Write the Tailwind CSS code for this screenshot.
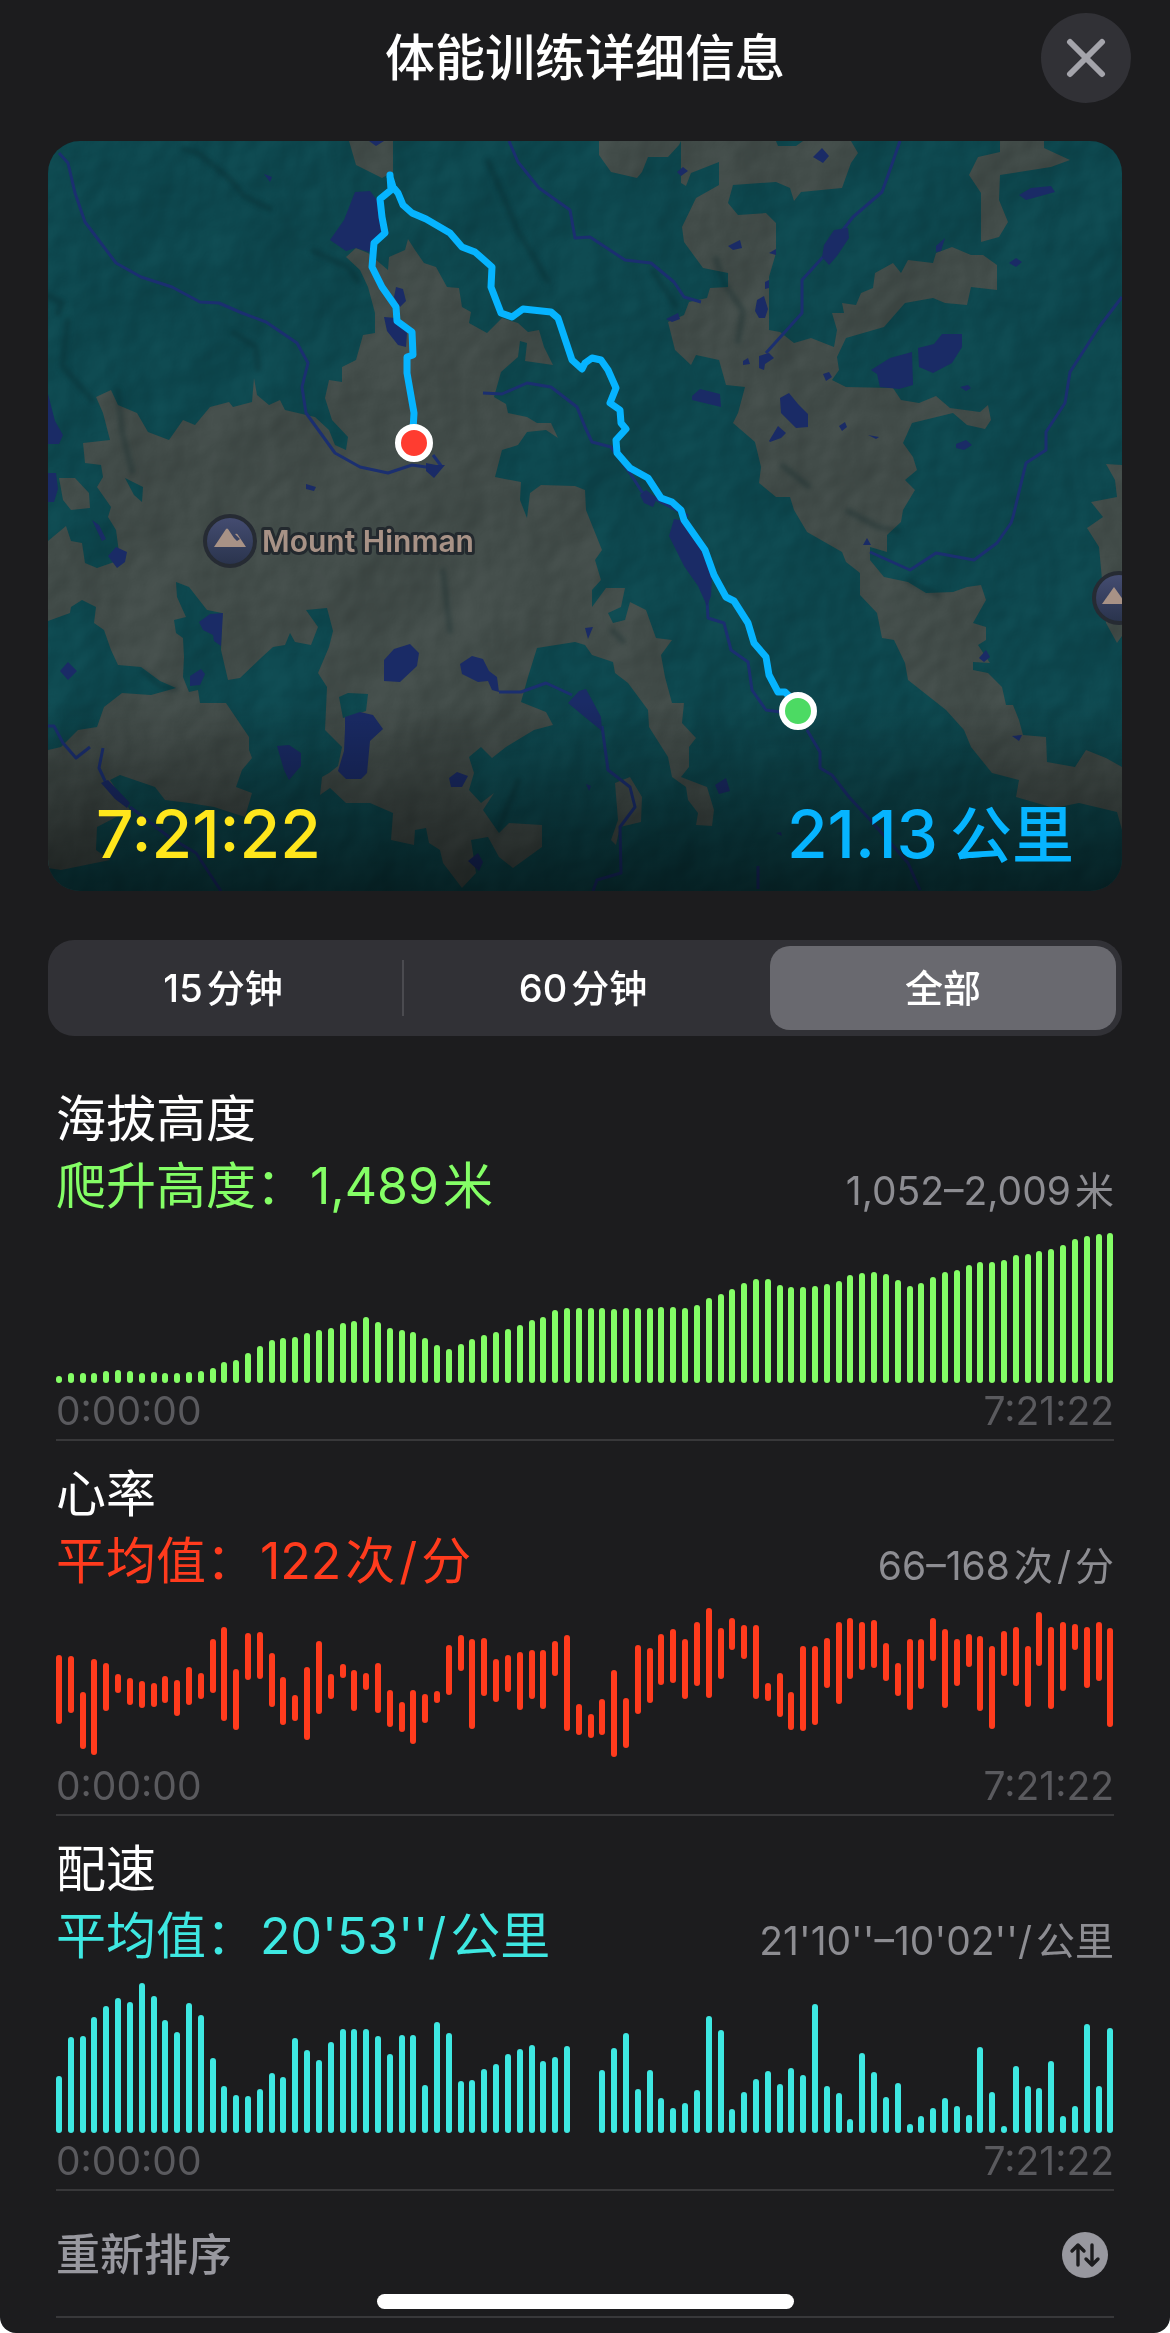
<!DOCTYPE html>
<html lang="zh-CN">
<head>
    <meta charset="UTF-8">
    <meta name="viewport" content="width=device-width, initial-scale=1.0">
    <title>体能训练详细信息</title>
    <script src="https://cdn.jsdelivr.net/npm/@tailwindcss/browser@4"></script>
</head>
<body class="bg-white font-[Inter,'Noto_Sans_CJK_SC',sans-serif]">
    <div class="relative min-h-screen overflow-hidden rounded-b-2xl bg-[#1c1c1e] text-white">
        <header class="relative flex h-[116px] items-center justify-center">
            <h1 class="text-[50px] font-medium">体能训练详细信息</h1>
            <button type="button" aria-label="关闭" class="absolute right-[39px] flex size-[90px] items-center justify-center rounded-full bg-[#313136]">
                <svg class="size-10" viewBox="0 0 40 40" fill="none" stroke="#a4a4ab" stroke-width="6" stroke-linecap="round"><path d="M4 4 36 36M36 4 4 36"/></svg>
            </button>
        </header>

        <main class="px-12 pt-[25px]">
            <div class="relative overflow-hidden rounded-[32px]">
                <svg class="block h-auto w-full" viewBox="0 0 1074 750">
                    <defs>
                        <linearGradient id="badge" x1="0" y1="0" x2="0" y2="1">
                            <stop offset="0" stop-color="#454d72"/>
                            <stop offset="1" stop-color="#29334c"/>
                        </linearGradient>
                        <linearGradient id="fade" x1="0" y1="0" x2="0" y2="1">
                            <stop offset="0" stop-color="#000" stop-opacity="0"/>
                            <stop offset="1" stop-color="#000" stop-opacity=".55"/>
                        </linearGradient>
                        <filter id="relief" x="0" y="0" width="100%" height="100%" color-interpolation-filters="sRGB">
                            <feTurbulence type="fractalNoise" baseFrequency=".009" numOctaves="4" seed="8"/>
                            <feDiffuseLighting surfaceScale="16" diffuseConstant="1" lighting-color="#fff">
                                <feDistantLight azimuth="215" elevation="28"/>
                            </feDiffuseLighting>
                        </filter>
                    </defs>
                    <!-- forest -->
                    <rect width="1074" height="750" fill="#0d474e"/>
                    <!-- bare ground -->
                    <g fill="#424c49">
                        <path d="M360 98 367 109 376 122 388 126 399 146 411 147 414 166 423 171 421 182 439 192 454 177 470 182 480 191 491 189 496 206 505 224 477 220 479 202 472 200 470 216 453 231 446 256 458 263 460 272 479 276 489 282 503 282 510 297 498 289 479 291 470 304 454 309 447 336 473 341 472 359 479 377 482 352 493 344 527 345 537 349 538 369 554 409 547 419 553 439 544 449 544 466 558 447 577 447 573 466 560 472 565 482 577 479 582 461 598 469 608 497 624 499 613 514 617 536 624 562 636 562 634 582 648 597 641 606 641 626 633 636 659 646 666 669 664 685 648 684 650 672 640 659 638 646 624 636 620 616 601 586 600 569 580 542 567 532 565 521 544 514 537 504 527 501 489 507 480 536 473 561 498 571 505 584 486 589 458 606 444 617 433 606 421 616 426 632 421 649 433 662 446 652 435 669 451 692 461 682 494 684 494 706 465 727 451 716 440 696 423 699 428 732 414 747 395 722 392 709 381 702 378 687 367 689 366 704 343 699 345 672 322 662 298 662 282 647 272 654 274 636 281 632 290 625 294 606 277 589 279 546 270 532 281 506 285 490 279 467 258 469 270 486 263 504 247 501 242 492 237 504 225 506 214 516 192 537 180 539 173 509 174 472 159 469 141 446 128 441 129 456 138 476 126 479 128 492 135 497 136 516 135 536 141 551 150 549 152 562 178 562 201 596 201 609 204 617 194 629 188 646 204 652 197 676 166 666 141 662 117 659 107 646 72 634 62 639 82 669 49 686 48 709 62 719 13 729 0 727V609L13 606 30 589 49 586 56 566 74 552 103 554 128 547 112 540 93 526 70 524 63 509 56 489 46 482 48 466 34 459 23 466 22 472 0 480V400L18 385 23 400 34 402 37 422 49 427 72 419 68 389 60 376 63 366 49 346 55 336 53 324 37 322 35 302 62 299 55 272 48 256 63 249 70 264 89 272 100 291 121 299 135 279 147 284 162 266 181 261 185 266 204 261 206 237 209 254 221 264 232 259 237 269 267 276 281 289 287 304 298 309 300 296 284 279 277 257 281 239 294 241 294 226 308 219 315 194 327 192 327 172 320 146 312 129 298 116 308 107 320 112 340 129 341 116 357 109Z"/>
                        <path d="M11 337H27L41 352 42 367 23 369 15 359ZM301 0 308 24 334 37 345 31V0ZM551 0V14L563 31 589 37 594 31 600 16 620 16 631 4 633 0Z"/>
                        <path d="M633 0V42L638 45 643 32 671 21V44L648 57 634 86 636 101 655 127 680 132V146L662 147 659 157 641 161 636 174 620 181 627 209 643 224 648 214 671 219 678 244 697 246 690 272 685 282 707 301 713 326 711 342 728 356 742 356 746 369 759 391 794 411 798 421 812 432V454L829 472 834 497 846 499 857 522 860 539 898 569 916 589 923 606 944 632 971 639 968 656 1006 667 1031 662 1069 671 1074 689V626L1058 617 1038 609 1027 626 999 621 998 596 975 594 971 579 965 564 958 564 954 546 940 532 925 529V521L942 522 930 504 938 499V486L925 482 938 459 933 444 919 446 905 451 878 452 860 441 836 436 822 419V406L839 411V394L853 381 855 369 867 349 857 339 869 329 865 316 855 302 864 282 905 272 919 284 937 288 943 279 940 264 932 271 902 267 888 255 871 262 853 259 845 247 798 246 784 239 791 229 789 216 798 197 836 186 857 162 885 157 897 162 919 164 923 146 949 149V124L935 114 923 114 904 106 888 112 885 122 860 119 853 132 845 122 827 132 825 147 813 152 808 164 794 162 796 172 784 172 789 189 786 206 763 197 746 202 732 191 721 189V136L728 112V82L718 72 690 74 680 62 685 44 728 41 742 47 746 60 753 51 794 47 803 22 810 12 803 0H755L748 5H730L728 0Z"/>
                        <path d="M952 0V11L930 16 921 34 933 52V101L951 96 960 81 951 59 952 34 1003 26 1022 19 996 7V0ZM1074 324 1058 323 1067 339 1069 356 1043 361 1055 376 1039 387 1051 406 1058 482 1069 502 1074 495ZM567 642 582 636 594 656 593 681 572 686 568 704 563 699 570 679Z"/>
                    </g>
                    <path fill="#0d474e" d="M77 337 95 346 94 361 86 354ZM291 556 300 552 320 553 318 570 295 577Z"/>
                    <!-- hill shading -->
                    <rect width="1074" height="750" filter="url(#relief)" class="opacity-15 mix-blend-soft-light"/>
                    <g fill="none" stroke="#061f22" stroke-width="6" stroke-linecap="round" stroke-linejoin="round" opacity=".25" class="blur-[2px]">
                        <path d="M135 8 150 12 182 38 196 55 222 68M0 155 14 162 10 172M186 192 208 206 210 228M440 20 470 90 500 140M20 180 14 225 45 260M70 250 74 290 84 330M265 110 300 126 310 140M95 530 112 545 128 548M565 490 575 500M395 430 402 490M668 118 676 142 695 170 690 200M800 370 830 386 850 390M605 130 628 165M470 640 450 690M860 440 890 454M735 325 760 345"/>
                    </g>
                    <!-- streams -->
                    <g fill="none" stroke="#1b2f70" stroke-width="3" stroke-linejoin="round">
                        <path d="M11 12 20 22 27 52 37 81 68 122 93 136 124 146 152 161 171 162 194 172 218 181 249 202 260 222 254 246 258 272 287 312 312 326 340 332 364 324 385 327M385 314 394 326M461 0 470 21 491 47 522 69 527 97 542 96 577 119 603 122 626 141 636 156 653 161"/>
                        <path d="M435 252 454 253 479 242 503 246 529 266 537 286 544 301 563 306 582 332 594 351 640 375M659 459 660 477 676 482 683 509 700 521 704 549 718 569 740 572M759 589 772 611V627L784 634 801 656 825 682 860 722 872 749"/>
                        <path d="M852 0 843 26 834 51 805 76 790 95M775 116 754 139V172L718 212M1074 156 1051 186 1022 231 1017 262 998 291V309L978 322 965 376 963 382 949 402 926 419 888 412 862 429 822 411"/>
                        <path d="M451 551H473L498 542 524 554M554 585 560 629 582 646 587 666 572 686 573 732 549 739 545 750M0 585H6L15 602 28 617 42 606M55 607 51 627 58 642M82 666 121 696 148 712 173 750M710 725V748"/>
                    </g>
                    <!-- lakes -->
                    <g fill="#1a2b66">
                        <path d="M307 51 322 50 329 59 334 89 324 112 308 107 298 110 282 99 296 79ZM348 146 355 148 358 160 352 166 346 156ZM336 176 348 177 359 192 358 206 350 204 339 190ZM321 0H336L328 5ZM378 322 388 324 397 324 386 337 378 330ZM258 343 268 346 266 350 258 348ZM216 33 224 36 222 41ZM0 253 7 280 15 294 11 303H0ZM0 332H8L10 348 6 361H0Z"/>
                        <path d="M765 16 774 7 781 15 775 22ZM629 31 635 26 640 30 633 35ZM680 105 692 99 694 107 685 109ZM776 104 786 89 800 87 801 97 789 115 781 124 774 116ZM721 112 728 108V114ZM888 105 897 97 893 110 888 111ZM971 54 983 47 1003 45 1007 51 978 59ZM961 122 968 117 974 121 968 126ZM717 141 721 139V147L717 148ZM709 159 716 155 720 168 717 177 711 177 707 170ZM618 178 630 172 632 178 624 181ZM695 220 700 217 702 223 695 224ZM711 215 721 212 726 217 717 223 716 229 711 227ZM775 233 781 231 784 236 778 240ZM823 229 842 217 864 211 865 244 851 248 832 246 829 233Z"/>
                        <path d="M870 207 886 203 894 193 914 193V206L904 222 885 232 871 226ZM644 255 652 248 672 253 673 266 644 259ZM732 257 741 252 750 263 760 273V286L748 287 733 272ZM721 300 730 285 738 292 733 297 722 301ZM791 285 797 281 799 286 794 290ZM820 294 831 296 828 298ZM912 246 920 244 923 247 918 250ZM908 303 918 299 924 304 916 309 908 307ZM592 354 598 349 609 357 605 366 596 362Z"/>
                        <path d="M626 378 621 395 636 425 650 445 659 465 663 455 664 435 655 409 637 380ZM815 404 819 397 823 404ZM931 517 938 509 942 516 936 521ZM964 595 974 594 971 600ZM667 644 678 637 682 650 671 653ZM537 487 545 486 540 498ZM728 692 733 691 734 695ZM538 643 543 645 541 650ZM520 562 531 550 538 548 544 559 553 576 554 590 538 577Z"/>
                        <path d="M336 519 346 508 362 503 371 512 369 525 352 541 336 540ZM412 523 424 515 435 518 441 530 449 536 451 551 444 549 440 540 430 541 414 533ZM297 588V576L312 571 325 574 335 588 322 600 319 632 313 638 298 638 290 630 296 610ZM151 481 162 473 175 472 173 505 166 500 165 494 155 489ZM142 545V535L153 528 157 533 152 544ZM229 605 241 604 253 612V625L241 639 236 629ZM401 637 409 631 420 635 414 646H403ZM60 415 68 406 79 411 77 421 69 427ZM44 379 51 384 58 398 54 400ZM12 530 20 521 29 530 20 539ZM53 642 60 639 82 662 79 667 67 658ZM420 720 430 712 435 721 431 730Z"/>
                    </g>
                    <!-- route -->
                    <path fill="none" stroke="#06b4ff" stroke-width="7" stroke-linejoin="round" stroke-linecap="round" d="M342 34 343 49 332 58 334 76 337 92 326 102 324 126 334 146 348 166 349 180 364 191 365 214 359 216 359 232 366 272 365 289M342 36 345 46 350 52 355 64 364 72 378 78 402 92 414 106 427 111 444 126 443 146 453 172 464 176 475 168 503 171 510 177 524 219 534 228 537 222 544 217 553 219 560 229 568 247 562 262 572 269 573 282 578 288 568 299 569 312 582 327 600 337 613 357 624 361 633 369 636 379 657 409 666 434 678 456 686 460 700 482 706 502 718 516 721 534 730 551 737 551 748 562"/>
                    <!-- peaks -->
                    <g fill="#a89286">
                        <circle cx="182" cy="400" r="25" fill="url(#badge)" stroke="#262b33" stroke-width="4"/>
                        <path d="M166 406 178 388 Q179 387 180 388L186 397 189 400 192 398 187 393 Q189 392 190 394L198 406Z"/>
                        <circle cx="1071" cy="457" r="25" fill="url(#badge)" stroke="#262b33" stroke-width="4"/>
                        <path d="M1054 463 1066 446 1078 463Z"/>
                        <text x="214" y="411" stroke="#23292e" stroke-width="6" stroke-linejoin="round" paint-order="stroke" class="text-[30px] font-semibold">Mount Hinman</text>
                    </g>
                    <rect y="560" width="1074" height="190" fill="url(#fade)"/>
                    <g stroke="#fff" stroke-width="6">
                        <circle cx="366" cy="302" r="16" fill="#ff3c30"/>
                        <circle cx="750" cy="570" r="16" fill="#4cda63"/>
                    </g>
                </svg>
                <div class="absolute inset-x-12 bottom-4 flex items-baseline justify-between text-[66px] leading-[78px] font-medium">
                    <span class="text-[#ffe61c]">7:21:22</span>
                    <span class="flex items-baseline gap-3 text-[#06b4ff]">21.13<span class="text-[62px]">公里</span></span>
                </div>
            </div>

            <div class="mt-[49px] flex h-24 items-center rounded-[26px] bg-[#313136] py-1.5 pr-1.5 pl-0.5 text-[38px] font-medium">
                <button type="button" class="flex h-full flex-1 items-center justify-center gap-1"><span>15</span><span>分钟</span></button>
                <span class="mx-1.5 h-14 w-0.5 bg-[#4b4b50]"></span>
                <button type="button" class="flex h-full flex-1 items-center justify-center gap-1"><span>60</span><span>分钟</span></button>
                <span class="mx-1.5 h-14 w-0.5"></span>
                <button type="button" aria-pressed="true" class="h-full flex-1 rounded-[20px] bg-[#69696f]">全部</button>
            </div>

            <div class="mt-[30px] px-2">
                <section class="border-b-2 border-[#38383a] pt-5">
                    <h2 class="text-[50px] leading-[66px]">海拔高度</h2>
                    <div class="flex h-[68px] items-end justify-between">
                        <p class="flex gap-1 text-[50px] leading-[68px] text-[#84fe66]"><span>爬升高度：</span><span>1,489</span><span>米</span></p>
                        <p class="flex gap-1 text-[39px] leading-[58px] text-[#8d8d92]"><span>1,052–2,009</span><span>米</span></p>
                    </div>
                    <div id="elevation" class="mt-[13px] flex h-[150px] items-end justify-between"></div>
                    <div class="flex h-[56px] items-center justify-between text-[39px] text-[#5a5a5e]"><span>0:00:00</span><span>7:21:22</span></div>
                </section>
                <section class="border-b-2 border-[#38383a] pt-5">
                    <h2 class="text-[50px] leading-[66px]">心率</h2>
                    <div class="flex h-[68px] items-end justify-between">
                        <p class="flex gap-1 text-[50px] leading-[68px] text-[#ff3b1d]"><span>平均值：</span><span>122</span><span>次</span><span>/</span><span>分</span></p>
                        <p class="flex gap-1 text-[39px] leading-[58px] text-[#8d8d92]"><span>66–168</span><span>次</span><span>/</span><span>分</span></p>
                    </div>
                    <div id="heart" class="mt-[13px] flex h-[150px] items-start justify-between"></div>
                    <div class="flex h-[56px] items-center justify-between text-[39px] text-[#5a5a5e]"><span>0:00:00</span><span>7:21:22</span></div>
                </section>
                <section class="border-b-2 border-[#38383a] pt-5">
                    <h2 class="text-[50px] leading-[66px]">配速</h2>
                    <div class="flex h-[68px] items-end justify-between">
                        <p class="flex gap-1 text-[50px] leading-[68px] text-[#3ee8e2]"><span>平均值：</span><span>20'53''/</span><span>公里</span></p>
                        <p class="flex gap-1 text-[39px] leading-[58px] text-[#8d8d92]"><span>21'10''–10'02''/</span><span>公里</span></p>
                    </div>
                    <div id="pace" class="mt-[13px] flex h-[150px] items-end justify-between"></div>
                    <div class="flex h-[56px] items-center justify-between text-[39px] text-[#5a5a5e]"><span>0:00:00</span><span>7:21:22</span></div>
                </section>
                <button type="button" class="flex h-[127px] w-full items-center justify-between border-b-2 border-[#38383a] pt-0.5 pr-1.5 text-[44px] font-medium text-[#98989f]">
                    <span>重新排序</span>
                    <svg class="size-[46px]" viewBox="0 0 46 46" fill="none" stroke="#1c1c1e" stroke-width="3.4" stroke-linecap="round" stroke-linejoin="round">
                        <circle cx="23" cy="23" r="23" fill="#98989f" stroke="none"/>
                        <path d="M16 33V13M10 19 16 13 22 19M30 13V33M24 27 30 33 36 27"/>
                    </svg>
                </button>
            </div>
        </main>
        <div class="absolute inset-x-0 bottom-6 mx-auto h-[15px] w-[417px] rounded-full bg-white"></div>
    </div>

    <script>
        const elevation = [
            7, 10, 10, 10, 12, 13, 12, 10, 11, 10, 10, 11, 12, 15, 21, 23, 30, 37, 43, 45, 46, 50, 53, 55, 60, 62, 66, 61, 55, 53,
            51, 45, 38, 34, 39, 44, 48, 51, 54, 58, 63, 66, 73, 75, 75, 75, 75, 74, 75, 75, 75, 76, 76, 75, 78, 85, 89, 94, 100, 104,
            104, 98, 96, 96, 97, 99, 102, 108, 110, 111, 109, 103, 97, 100, 106, 111, 113, 118, 121, 121, 123, 128, 129, 132, 134, 138, 144, 147, 149, 150
        ];
        // [offset from top, height]
        const heart = [
            [47,69],[48,57],[84,57],[51,96],[55,48],[66,19],[70,27],[73,27],[75,24],[68,27],[72,36],[59,38],[65,26],[31,54],[19,94],
            [61,61],[25,47],[24,47],[45,54],[69,48],[87,26],[59,73],[33,73],[66,25],[56,14],[62,41],[65,17],[55,50],[82,37],[94,30],
            [82,54],[86,29],[83,12],[37,50],[27,36],[31,90],[30,58],[51,43],[47,37],[44,58],[42,49],[42,59],[33,35],[27,96],[96,31],
            [106,24],[91,36],[62,87],[90,50],[37,69],[40,55],[26,51],[21,54],[31,60],[14,64],[0,90],[20,51],[10,32],[17,34],[17,74],
            [75,18],[65,44],[84,38],[38,85],[38,79],[30,50],[14,82],[10,61],[14,48],[12,48],[35,38],[55,33],[31,71],[31,50],[10,43],
            [21,79],[31,47],[26,33],[28,75],[38,83],[23,45],[19,59],[38,61],[4,54],[19,82],[14,69],[16,26],[19,61],[14,59],[20,99]
        ];
        const pace = [
            57, 96, 97, 116, 127, 135, 131, 150, 137, 113, 101, 130, 118, 75, 47, 38, 37, 44, 60, 56, 95, 83, 73, 91, 104, 104, 104, 97, 79, 98,
            98, 48, 111, 100, 52, 53, 64, 69, 79, 84, 88, 72, 76, 87, 0, 0, 63, 85, 100, 44, 63, 35, 25, 30, 43, 117, 103, 24, 41, 54,
            62, 49, 65, 58, 129, 47, 40, 14, 80, 61, 36, 50, 9, 17, 25, 35, 27, 18, 86, 41, 7, 67, 47, 45, 72, 17, 27, 109, 47, 105
        ];
        document.getElementById('elevation').innerHTML = elevation.map(h => `<i class="w-1.5 rounded-full bg-[#84fe66]" style="height:${h}px"></i>`).join('');
        document.getElementById('heart').innerHTML = heart.map(([t, h]) => `<i class="w-1.5 rounded-full bg-[#ff3b1d]" style="margin-top:${t}px;height:${h}px"></i>`).join('');
        document.getElementById('pace').innerHTML = pace.map(h => `<i class="w-1.5 rounded-full bg-[#3ee8e2]" style="height:${h}px"></i>`).join('');
    </script>
</body>
</html>
